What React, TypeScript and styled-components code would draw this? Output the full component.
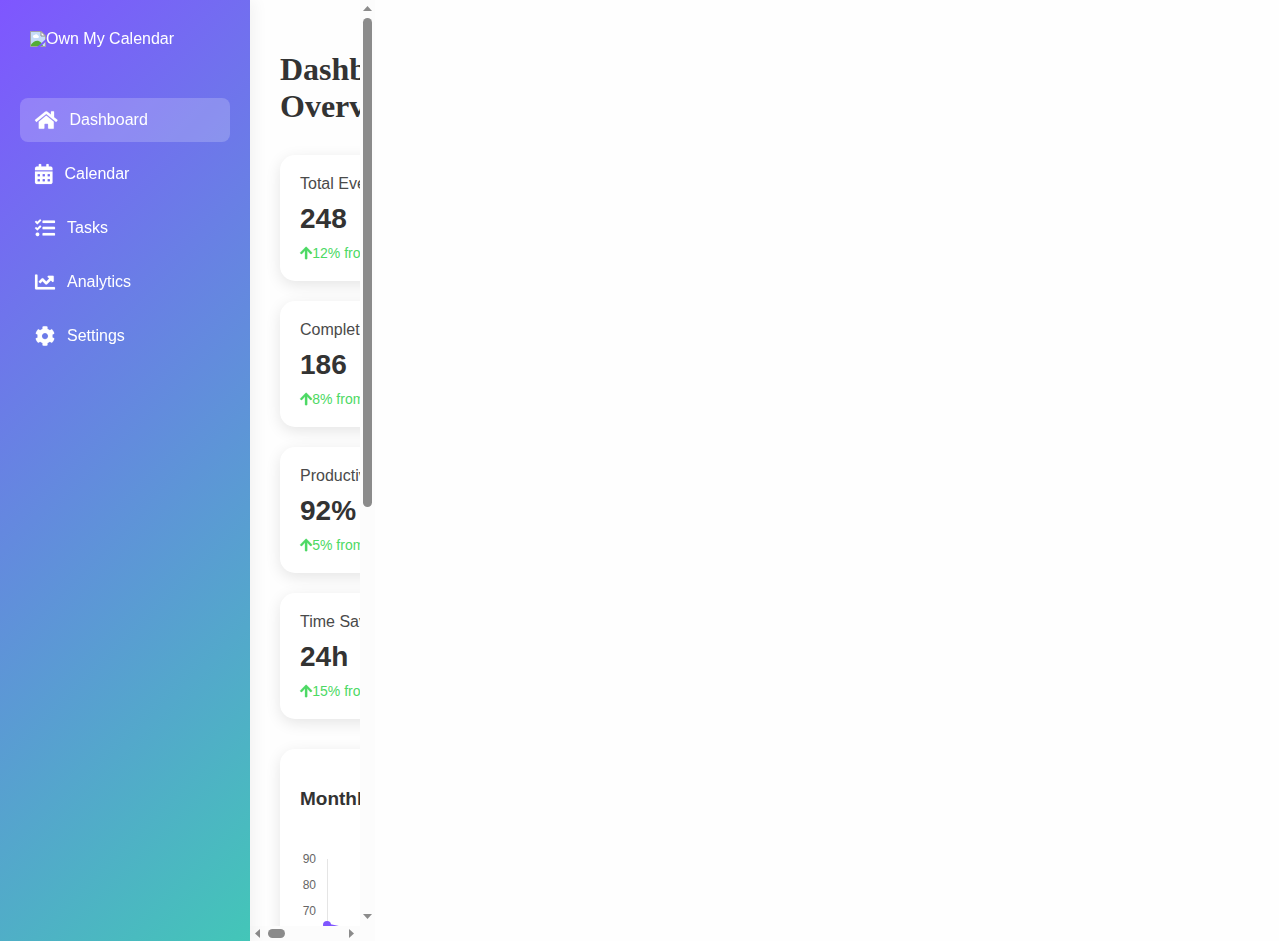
import React from 'react';
import styled, { createGlobalStyle } from 'styled-components';
import { FaHome, FaCalendarAlt, FaTasks, FaChartLine, FaCog, FaArrowUp } from 'react-icons/fa';

const GlobalStyle = createGlobalStyle`
  * { box-sizing: border-box; }
  body {
    margin: 0;
    background: #fefefe;
    color: #333333;
    font-family: "Liberation Sans", Arial, sans-serif;
    font-size: 16px;
  }
`;

const Shell = styled.div`
  display: grid;
  grid-template-columns: 250px minmax(0, 1fr);
  max-width: 375px;
  height: 100vh;
`;

const Sidebar = styled.aside`
  position: relative;
  z-index: 1;
  padding: 20px;
  color: #ffffff;
  background: linear-gradient(135deg, #7f56ff 0%, #43c6b8 100%);
  box-shadow: 4px 0 15px rgba(0, 0, 0, 0.05);
`;

const Logo = styled.div`
  display: flex;
  align-items: center;
  height: 38px;
  margin-bottom: 40px;
  padding: 10px;
  line-height: 18px;
`;

const Nav = styled.nav`
  display: flex;
  flex-direction: column;
  gap: 10px;
`;

const NavLink = styled.a<{ $active?: boolean; $ratio: string }>`
  display: flex;
  align-items: center;
  gap: 12px;
  height: 44px;
  padding: 0 15px;
  border-radius: 8px;
  color: #ffffff;
  text-decoration: none;
  background: ${({ $active }) => ($active ? 'rgba(255, 255, 255, 0.2)' : 'transparent')};

  svg {
    flex: none;
    width: auto;
    height: 20px;
    margin-bottom: 1px;
    overflow: visible;
    stroke-width: 4px;
    aspect-ratio: ${({ $ratio }) => $ratio};
  }
`;

const ScrollPane = styled.div`
  display: grid;
  grid-template: minmax(0, 1fr) 15px / minmax(0, 1fr) 15px;
  min-height: 0;
  background: #fcfcfc;
`;

const Main = styled.main`
  overflow: auto;
  scrollbar-width: none;
  background: #fefefe;
`;

const ScrollTrack = styled.div<{ $vertical?: boolean }>`
  display: flex;
  flex-direction: ${({ $vertical }) => ($vertical ? 'column' : 'row')};
  align-items: center;
  justify-content: space-between;
  padding: ${({ $vertical }) => ($vertical ? '6px 0 7px' : '0 6px 0 5px')};

  svg { flex: none; display: block; fill: #8b8b8b; }
`;

const ThumbSlot = styled.div<{ $vertical?: boolean }>`
  flex: 1;
  display: flex;
  flex-direction: ${({ $vertical }) => ($vertical ? 'column' : 'row')};
  padding: ${({ $vertical }) => ($vertical ? '7px 0' : '0 8px')};
`;

const Thumb = styled.div<{ $vertical?: boolean }>`
  border-radius: 5px;
  background: #8b8b8b;
  ${({ $vertical }) => ($vertical ? 'width: 9px; height: 55%;' : 'width: 17px; height: 9px;')}
`;

const Content = styled.div`
  min-height: 1693px;
  padding: 30px;
`;

const PageTitle = styled.h1`
  margin: 21px 0 30px;
  font-family: "Liberation Serif", "Times New Roman", serif;
  font-size: 32px;
  line-height: 37px;
`;

const Stats = styled.section`
  display: grid;
  grid-template-columns: repeat(auto-fit, minmax(250px, 1fr));
  gap: 20px;
  margin-bottom: 30px;
`;

const Card = styled.article`
  padding: 20px;
  border-radius: 15px;
  background: #ffffff;
  box-shadow: 0 4px 15px rgba(0, 0, 0, 0.1);
`;

const StatCard = styled(Card)`
  display: flex;
  flex-direction: column;
  gap: 10px;
`;

const StatLabel = styled.div`
  color: #4a4a4a;
  line-height: 18px;
`;

const StatValue = styled.div`
  font-size: 28px;
  font-weight: bold;
  line-height: 32px;
`;

const StatTrend = styled.div`
  display: flex;
  align-items: center;
  color: #4cd964;
  font-size: 14px;
  line-height: 16px;

  svg {
    width: auto;
    height: 14px;
    overflow: visible;
    stroke-width: 10px;
    aspect-ratio: 7 / 8;
  }
`;

const Charts = styled.section`
  display: grid;
  grid-template-columns: repeat(auto-fit, minmax(450px, 1fr));
  gap: 30px;
`;

const ChartTitle = styled.h3`
  margin: 19px 0 39px;
  font-size: 19px;
  line-height: 21px;
`;

const Plot = styled.svg`
  display: block;

  text {
    fill: #666666;
    font-size: 12px;
    text-anchor: end;
  }
`;

const links = [
  { label: 'Dashboard', Icon: FaHome, ratio: '9 / 8' },
  { label: 'Calendar', Icon: FaCalendarAlt, ratio: '7 / 8' },
  { label: 'Tasks', Icon: FaTasks, ratio: '1' },
  { label: 'Analytics', Icon: FaChartLine, ratio: '1' },
  { label: 'Settings', Icon: FaCog, ratio: '1' },
];

const stats = [
  { label: 'Total Events', value: '248', trend: '12% from last month' },
  { label: 'Completed Tasks', value: '186', trend: '8% from last month' },
  { label: 'Productivity Score', value: '92%', trend: '5% from last month' },
  { label: 'Time Saved', value: '24h', trend: '15% from last month' },
];

const ticks = [90, 80, 70, 60, 50, 40];
const values = [65, 59, 80, 81, 56, 55];
const yOf = (v: number) => 11 + Math.round((90 - v) * 2.6);
const xOf = (i: number) => 27 + i * 74;

const BrokenImage = () => (
  <svg width="16" height="16" viewBox="0 0 16 16" aria-hidden="true">
    <path d="M0.5 0.5H11L15.500 5V15.500H0.500Z" fill="#c6dcf8" stroke="#a2a2a2" />
    <path d="M1 15V13.500C4 9.500 8 8.500 11 11.500L13 15Z" fill="#54ad35" />
    <path d="M3 6a1.500 1.500 0 0 1 1.500-2 2 2 0 0 1 3.500.5A1.300 1.300 0 0 1 8 7H4Z" fill="#ffffff" />
    <path d="M11 0.500V5H15.500Z" fill="#ffffff" stroke="#8f8f8f" />
    <path d="M16 8V10.500L10 16H7Z" fill="#7b5dfb" />
  </svg>
);

export default function App() {
  return (
    <>
      <GlobalStyle />
      <Shell>
        <Sidebar>
          <Logo>
            <BrokenImage />
            Own My Calendar
          </Logo>
          <Nav>
            {links.map(({ label, Icon, ratio }, i) => (
              <NavLink key={label} href="#" $active={i === 0} $ratio={ratio}>
                <Icon />
                {label}
              </NavLink>
            ))}
          </Nav>
        </Sidebar>
        <ScrollPane>
          <Main>
            <Content>
              <PageTitle>Dashboard Overview</PageTitle>
              <Stats>
                {stats.map((s) => (
                  <StatCard key={s.label}>
                    <StatLabel>{s.label}</StatLabel>
                    <StatValue>{s.value}</StatValue>
                    <StatTrend>
                      <FaArrowUp />
                      {s.trend}
                    </StatTrend>
                  </StatCard>
                ))}
              </Stats>
              <Charts>
                <Card>
                  <ChartTitle>Monthly Activity</ChartTitle>
                  <Plot width="410" height="160" viewBox="0 0 410 160">
                    {values.map((_, i) => (
                      <path key={i} d={`M${xOf(i) + 0.5} 11V150`} stroke="#e5e5e5" />
                    ))}
                    {ticks.map((t) => (
                      <text key={t} x="16" y={yOf(t) + 4}>{t}</text>
                    ))}
                    <polyline
                      points={values.map((v, i) => `${xOf(i)},${yOf(v) + 1}`).join(' ')}
                      fill="none"
                      stroke="#7f56ff"
                      strokeWidth="3"
                    />
                    {values.map((v, i) => (
                      <circle key={i} cx={xOf(i)} cy={yOf(v) + 1} r="4" fill="#7f56ff" />
                    ))}
                  </Plot>
                </Card>
              </Charts>
            </Content>
          </Main>
          <ScrollTrack $vertical>
            <svg width="9" height="5" viewBox="0 0 9 5"><path d="M0 5L4.500 0L9 5Z" /></svg>
            <ThumbSlot $vertical><Thumb $vertical /></ThumbSlot>
            <svg width="9" height="5" viewBox="0 0 9 5"><path d="M0 0L4.500 5L9 0Z" /></svg>
          </ScrollTrack>
          <ScrollTrack>
            <svg width="5" height="9" viewBox="0 0 5 9"><path d="M5 0L0 4.500L5 9Z" /></svg>
            <ThumbSlot><Thumb /></ThumbSlot>
            <svg width="5" height="9" viewBox="0 0 5 9"><path d="M0 0L5 4.500L0 9Z" /></svg>
          </ScrollTrack>
        </ScrollPane>
      </Shell>
    </>
  );
}
